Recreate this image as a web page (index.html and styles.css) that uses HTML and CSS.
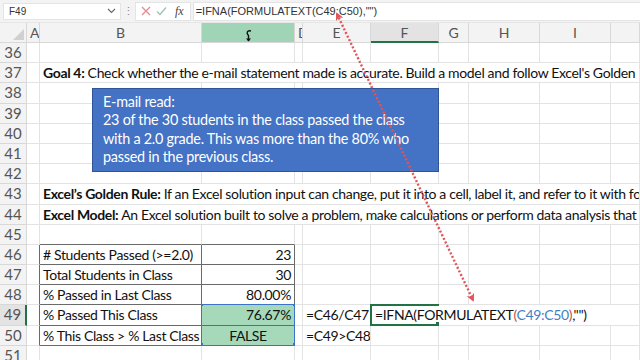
FILE: index.html
```html
<!DOCTYPE html>
<html lang="en">
<head>
    <meta charset="UTF-8">
    <meta name="viewport" content="width=device-width, initial-scale=1.0">
    <title>Goal 4 - Excel Model</title>
    <link rel="stylesheet" href="styles.css">
</head>
<body>
    <div class="app">
        <div class="formula-bar">
            <div class="name-box">
                <span>F49</span>
                <svg class="chevron" width="9" height="6" viewBox="0 0 9 6"><path d="M1 1l3.5 3.5L8 1" fill="none" stroke="#666" stroke-width="1.1"/></svg>
            </div>
            <span class="bar-dots">⋮</span>
            <div class="bar-buttons">
                <svg width="10" height="10" viewBox="0 0 10 10"><path d="M1 1l8 8M9 1l-8 8" stroke="#e68a8a" stroke-width="1.3"/></svg>
                <svg width="11" height="10" viewBox="0 0 11 10"><path d="M1 5.5l3 3L10 1.5" fill="none" stroke="#9cc5ad" stroke-width="1.3"/></svg>
                <span class="fx">fx</span>
            </div>
            <div class="formula-input">=IFNA(FORMULATEXT(C49:C50),"")</div>
        </div>

        <div class="sheet" id="sheet"></div>

        <div class="callout">
            E-mail read:<br>
            23 of the 30 students in the class passed the class<br>
            with a 2.0 grade. This was more than the 80% who<br>
            passed in the previous class.
        </div>

        <svg class="arrow" width="640" height="360" viewBox="0 0 640 360">
            <defs>
                <marker id="head" markerWidth="8" markerHeight="8" refX="6" refY="4" orient="auto-start-reverse" markerUnits="userSpaceOnUse">
                    <path d="M0 0L8 4L0 8L2 4z" fill="#e2545a"/>
                </marker>
            </defs>
            <line x1="337" y1="14" x2="473" y2="300" stroke="#e2545a" stroke-width="2.4" stroke-dasharray="2 2" marker-start="url(#head)" marker-end="url(#head)"/>
        </svg>
    </div>

    <script>
        const sheet = document.getElementById('sheet');
        const letters = ['A', 'B', 'C', 'D', 'E', 'F', 'G', 'H', 'I', ''];
        const formula = '=IFNA(FORMULATEXT<span class="paren">(</span><span class="ref">C49:C50</span><span class="paren">)</span>,"")';

        // key is row:column, column 1 = A
        const content = {
            '37:2': { span: 9, cls: 'long', html: '<b>Goal 4:</b> Check whether the e-mail statement made is accurate. Build a model and follow Excel\'s Golden Rule.' },
            '43:2': { span: 9, cls: 'long', html: '<b>Excel’s Golden Rule:</b> If an Excel solution input can change, put it into a cell, label it, and refer to it with formulas.' },
            '44:2': { span: 9, cls: 'long', html: '<b>Excel Model:</b> An Excel solution built to solve a problem, make calculations or perform data analysis that can be reused.' },
            '46:2': { html: '# Students Passed (&gt;=2.0)' },
            '46:3': { cls: 'num', html: '23' },
            '47:2': { html: 'Total Students in Class' },
            '47:3': { cls: 'num', html: '30' },
            '48:2': { html: '% Passed in Last Class' },
            '48:3': { cls: 'num', html: '80.00%' },
            '49:2': { html: '% Passed This Class' },
            '49:3': { cls: 'num fill', html: '76.67%' },
            '49:5': { html: '=C46/C47' },
            '49:6': { span: 5, cls: 'edit', html: formula },
            '50:2': { html: '% This Class &gt; % Last Class' },
            '50:3': { cls: 'mid fill', html: 'FALSE' },
            '50:5': { html: '=C49&gt;C48' }
        };

        function addCell(row, col, span, cls, html) {
            const div = document.createElement('div');
            div.className = 'cell ' + cls;
            div.style.gridArea = row + ' / ' + col + ' / span 1 / span ' + span;
            div.innerHTML = html;
            sheet.appendChild(div);
            return div;
        }

        addCell(1, 1, 1, 'corner', '');
        letters.forEach(function (l, i) {
            let cls = 'colhead';
            if (l === 'C') cls += ' picked';
            if (l === 'F') cls += ' current';
            const head = addCell(1, i + 2, 1, cls, l);
            if (l === 'C') head.innerHTML = '<svg class="cursor" width="9" height="13" viewBox="0 0 9 13"><path d="M7 2C3 1 2 4 4.5 6.5V12" fill="none" stroke="#111" stroke-width="1.4"/><path d="M2 9.5l2.5 3 2.5-3" fill="#111"/></svg>';
        });

        for (let r = 36; r <= 51; r++) {
            const gridRow = r - 34;
            addCell(gridRow, 1, 1, r === 49 ? 'rowhead current' : 'rowhead', r);
            for (let c = 1; c <= 10; c++) {
                const item = content[r + ':' + c] || {};
                const span = item.span || 1;
                let cls = item.cls || '';
                if (r >= 46 && r <= 50 && (c === 2 || c === 3)) cls += ' tb';
                if (r === 45 && (c === 2 || c === 3)) cls += ' tt';
                if (r >= 46 && r <= 50 && c === 1) cls += ' tl';
                addCell(gridRow, c + 1, span, cls, item.html || '');
                c += span - 1;
            }
        }

        addCell(15, 4, 1, 'select', '').style.gridRow = '15 / span 2';
        addCell(15, 7, 1, 'active', '<span class="handle"></span>');
    </script>
</body>
</html>
```

FILE: styles.css
```css
body {
    margin: 0;
    background: #fff;
    font-family: Lato, "Liberation Sans", sans-serif;
}
.app {
    position: relative;
    width: 640px;
    height: 360px;
    overflow: hidden;
    background: #fff;
}
.formula-bar {
    display: flex;
    align-items: center;
    height: 22px;
    background: #f3f3f3;
    border-bottom: 1px solid #e6e6e6;
    font-family: "Liberation Sans", sans-serif;
    font-size: 10px;
    color: #333;
}
.name-box {
    display: flex;
    align-items: center;
    justify-content: space-between;
    width: 118px;
    height: 17px;
    margin-left: 3px;
    padding: 0 4px 0 5px;
    box-sizing: border-box;
    background: #fff;
    border: 1px solid #e4e4e4;
}
.bar-dots {
    width: 14px;
    text-align: center;
    color: #888;
    font-size: 11px;
}
.bar-buttons {
    display: flex;
    align-items: center;
    gap: 5px;
    height: 17px;
    padding: 0 6px 0 5px;
    background: #fff;
    border: 1px solid #e4e4e4;
}
.fx {
    font-family: "Liberation Serif", serif;
    font-style: italic;
    font-size: 12px;
    color: #444;
    margin-left: 3px;
}
.formula-input {
    flex: 1;
    height: 17px;
    margin-left: 2px;
    padding-left: 2px;
    line-height: 17px;
    background: #fff;
    border: 1px solid #e4e4e4;
    border-right: none;
    font-size: 11px;
}
.sheet {
    display: grid;
    grid-template-columns: 27px 13px 162px 93px 8px 68px 68px 30px 71px 71px 1fr;
    grid-template-rows: 20px repeat(16, 20.2px);
    font-size: 14px;
    color: #111;
}
.cell {
    box-sizing: border-box;
    border-right: 1px solid #e3e3e3;
    border-bottom: 1px solid #e3e3e3;
    padding: 0 3px;
    line-height: 19px;
    white-space: nowrap;
    overflow: hidden;
    letter-spacing: -0.35px;
}
.corner {
    position: relative;
    background: #f3f3f3;
    border-color: #d8d8d8;
}
.corner::after {
    content: "";
    position: absolute;
    right: 2px;
    bottom: 2px;
    border-left: 11px solid transparent;
    border-bottom: 11px solid #d0d0d0;
}
.colhead {
    position: relative;
    background: #f3f3f3;
    border-color: #d8d8d8;
    text-align: center;
    color: #555;
    line-height: 20px;
    letter-spacing: 0;
}
.colhead.picked {
    background: #9fd4b6;
}
.colhead.current {
    background: #e3e3e3;
    border-bottom: 2px solid #217346;
}
.cursor {
    margin-top: 6px;
}
.rowhead {
    background: #f3f3f3;
    border-color: #d8d8d8;
    text-align: center;
    color: #555;
    font-size: 15px;
    padding: 0;
    letter-spacing: 0;
}
.rowhead.current {
    background: #e3e3e3;
    border-right: 2px solid #217346;
}
.long {
    overflow: hidden;
}
.num {
    text-align: right;
}
.mid {
    text-align: center;
}
.fill {
    background: #a6d9ba;
}
.tb {
    border-right-color: #6a6a6a;
    border-bottom-color: #6a6a6a;
}
.tt {
    border-bottom-color: #6a6a6a;
}
.tl {
    border-right-color: #6a6a6a;
}
.edit {
    background: #fff;
    padding-left: 4px;
    z-index: 1;
}
.paren {
    color: #c0504d;
}
.ref {
    color: #3f7fc4;
}
.select {
    position: relative;
    border: 1px solid #3b74c7;
    margin: -1px 0 0 -1px;
    z-index: 2;
}
.select::before {
    content: "";
    position: absolute;
    left: -3px;
    top: -3px;
    width: 4px;
    height: 4px;
    background: #3b74c7;
    box-shadow: 94px 0 #3b74c7, 0 41px #3b74c7, 94px 41px #3b74c7;
}
.active {
    position: relative;
    border: 2px solid #217346;
    border-right: none;
    margin: -1px 0 0 -1px;
    z-index: 2;
    padding: 0;
}
.handle {
    position: absolute;
    right: -2px;
    bottom: -3px;
    width: 4px;
    height: 4px;
    background: #217346;
    border: 1px solid #fff;
}
.callout {
    position: absolute;
    left: 92px;
    top: 88px;
    width: 347px;
    height: 84px;
    box-sizing: border-box;
    padding: 4px 10px;
    background: #4472c4;
    border: 1px solid #2f5597;
    color: #fff;
    font-size: 14.4px;
    line-height: 18.4px;
    letter-spacing: -0.25px;
    white-space: nowrap;
}
.arrow {
    position: absolute;
    left: 0;
    top: 0;
    pointer-events: none;
}
```
